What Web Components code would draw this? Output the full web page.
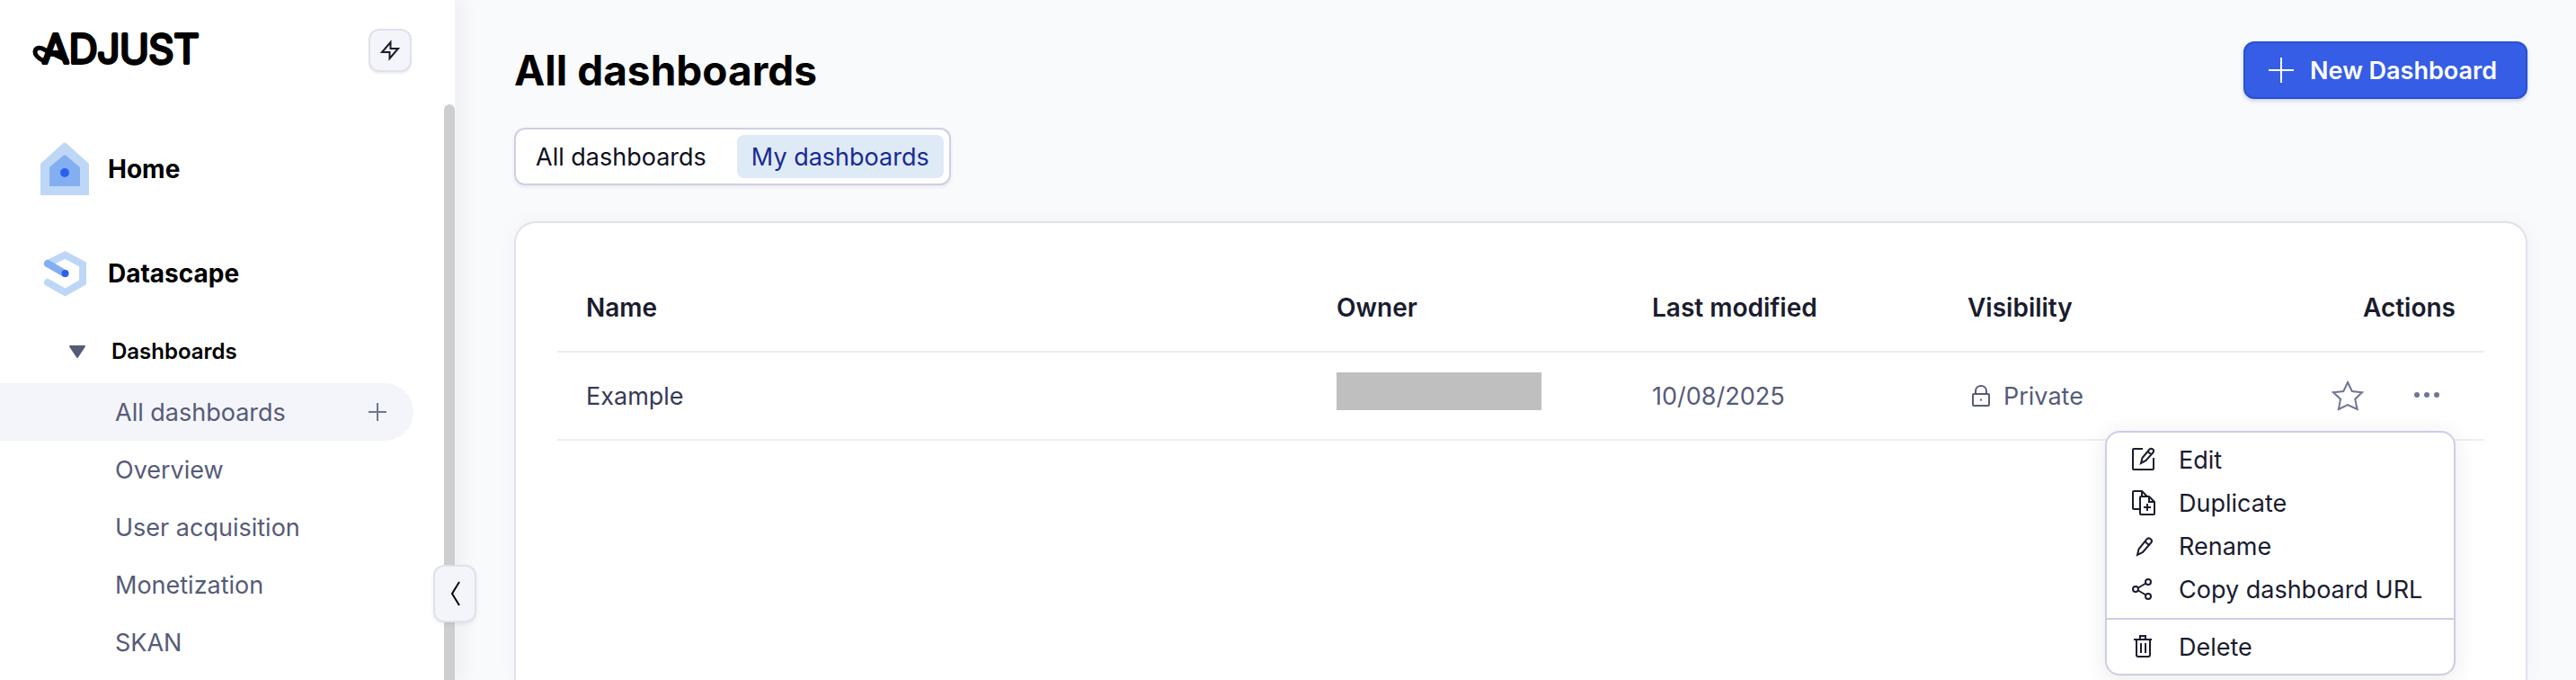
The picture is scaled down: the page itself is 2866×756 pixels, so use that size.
<!DOCTYPE html>
<html lang="en">
<head>
<meta charset="utf-8">
<title>All dashboards</title>
<style>
  body { margin: 0; font: 400 27px/41px Inter, "Liberation Sans", sans-serif; color: #1a1c2e; background: #f9fafc; }
</style>
</head>
<body>
<app-shell>
  <side-nav slot="nav">
    <nav-section label="Home">
      <svg slot="icon" width="56" height="64" viewBox="0 0 56 64"><path d="M26.5 3Q28 2 29.500 3L55 26V61H1V26Z" fill="#bed7f7"/><path d="M26.500 17Q28 15.500 29.500 17L45 30V51H11V30Z" fill="#84aef2"/><circle cx="28" cy="36" r="5" fill="#2a5ff0"/></svg>
    </nav-section>
    <nav-section label="Datascape">
      <svg slot="icon" width="56" height="64" viewBox="0 0 56 64"><path d="M9 21L28.500 11.500L48 22V42L28.500 53L9 42" fill="none" stroke="#bed7f7" stroke-width="8" stroke-linecap="round"/><path d="M9 21L28 32" stroke="#84aef2" stroke-width="8" stroke-linecap="round"/><circle cx="28.500" cy="32" r="4" fill="#2a5ff0"/></svg>
    </nav-section>
    <nav-group label="Dashboards">
      <nav-link active>All dashboards</nav-link>
      <nav-link>Overview</nav-link>
      <nav-link>User acquisition</nav-link>
      <nav-link>Monetization</nav-link>
      <nav-link>SKAN</nav-link>
    </nav-group>
  </side-nav>
  <page-header>All dashboards</page-header>
  <segmented-tabs></segmented-tabs>
  <content-card><dashboard-table></dashboard-table></content-card>
</app-shell>

<script>
function define(name, html, setup) {
  const tpl = document.createElement('template');
  tpl.innerHTML = '<style>*{box-sizing:border-box}svg{display:block;flex:none}button{font:inherit;color:inherit;margin:0;cursor:pointer}</style>' + html;
  customElements.define(name, class extends HTMLElement {
    constructor() {
      super();
      this.attachShadow({ mode: 'open' }).append(tpl.content.cloneNode(true));
    }
    connectedCallback() { if (setup) setup(this, this.shadowRoot); }
  });
}

define('app-shell', `
<style>
  :host { display: flex; height: 100vh; overflow: hidden; }
  main { flex: 1; min-width: 0; display: flex; flex-direction: column; padding: 46px 54px 0 64px; }
</style>
<slot name="nav"></slot>
<main><slot></slot></main>`);

define('brand-logo', `
<style>
  :host { display: block; }
  text { font: 300 44px Inter, sans-serif; fill: #000; stroke: #000; stroke-width: 4; stroke-linejoin: round; }
</style>
<svg width="208" height="64" viewBox="0 0 208 64" role="img" aria-label="Adjust">
  <path d="M17 44C11 41 7 38 7 34C7 29 12 28 17 31L42 43" fill="none" stroke="#000" stroke-width="5" stroke-linecap="round" stroke-linejoin="round"/>
  <text x="15" y="46">ADJUST</text>
</svg>`);

define('side-nav', `
<style>
  :host { position: relative; flex: 0 0 508px; display: flex; flex-direction: column; background: #fff; border-right: 2px solid #f3f4f7; box-shadow: 0 0 24px rgba(30,35,60,.09); box-sizing: border-box; }
  header { display: flex; justify-content: space-between; align-items: center; height: 116px; padding: 0 48px 4px 32px; }
  .quick { display: grid; place-items: center; width: 48px; height: 48px; padding: 0; border: 2px solid #e1e1ec; border-radius: 12px; background: #f4f5fa; box-shadow: 0 2px 2px rgba(30,35,60,.08); }
  .scroll { flex: 1; min-height: 0; display: flex; }
  nav { flex: 1; min-width: 0; padding-top: 14px; }
  .thumb { width: 12px; border-radius: 6px 6px 0 0; background: #cdcecf; }
  .fold { position: absolute; right: -24px; top: 628px; display: grid; place-items: center; width: 48px; height: 64px; padding: 0; border: 2px solid #e1e1ec; border-radius: 12px; background: #f4f5fa; box-shadow: 0 2px 4px rgba(30,35,60,.08); }
</style>
<header>
  <brand-logo></brand-logo>
  <button class="quick" aria-label="Quick actions"><svg width="24" height="24" viewBox="0 0 24 24" fill="none" stroke="#1a1c2e" stroke-width="2"><path d="M12.500 3L3 14H11.500V21L21 10H12.500Z"/></svg></button>
</header>
<div class="scroll"><nav><slot></slot></nav><div class="thumb"></div></div>
<button class="fold" aria-label="Collapse sidebar"><svg width="24" height="32" viewBox="0 0 24 32" fill="none" stroke="#000" stroke-width="2"><path d="M17 3L9 16L17 29"/></svg></button>`);

define('nav-section', `
<style>
  :host { display: block; }
  a { display: flex; align-items: center; gap: 20px; height: 116px; padding-left: 44px; color: #000; font-size: 28px; line-height: 40px; font-weight: 700; text-decoration: none; }
</style>
<a href="#"><slot name="icon"></slot><span></span></a>`,
  (el, root) => { root.querySelector('span').textContent = el.getAttribute('label'); });

define('nav-group', `
<style>
  :host { display: block; }
  .toggle { display: flex; align-items: center; gap: 28px; width: 100%; height: 58px; margin-bottom: 6px; padding: 0 0 0 76px; border: 0; background: none; color: #000; font-size: 24px; line-height: 40px; font-weight: 600; }
</style>
<button class="toggle" aria-expanded="true"><svg width="20" height="16" viewBox="0 0 20 16"><path d="M2 2H18L10 14Z" fill="#565b78" stroke="#565b78" stroke-width="2" stroke-linejoin="round"/></svg><span></span></button>
<slot></slot>`,
  (el, root) => { root.querySelector('span').textContent = el.getAttribute('label'); });

define('nav-link', `
<style>
  :host { display: flex; align-items: center; justify-content: space-between; height: 64px; margin-right: 34px; border-radius: 0 32px 32px 0; color: #565b78; }
  :host([active]) { background: #f4f5fa; }
  a { flex: 1; padding-left: 128px; color: inherit; text-decoration: none; }
  button { display: none; padding: 0; margin-right: 28px; border: 0; background: none; }
  :host([active]) button { display: block; }
</style>
<a href="#"><slot></slot></a>
<button aria-label="Add dashboard"><svg width="24" height="24" viewBox="0 0 24 24" stroke="#6f7594" stroke-width="2"><path d="M2 12H22M12 2V22"/></svg></button>`);

define('page-header', `
<style>
  :host { display: flex; align-items: center; justify-content: space-between; height: 64px; margin-bottom: 32px; }
  h1 { margin: 0; color: #000; font-size: 46px; line-height: 64px; font-weight: 700; }
  button { display: flex; align-items: center; gap: 16px; height: 64px; padding: 0 32px 0 24px; border: 2px solid #2b4fd2; border-radius: 12px; background: #355de6; color: #fff; font-weight: 600; box-shadow: 0 2px 4px rgba(43,79,210,.25); }
</style>
<h1><slot></slot></h1>
<button><svg width="32" height="32" viewBox="0 0 32 32" stroke="#fff" stroke-width="2"><path d="M2 16H30M16 2V30"/></svg>New Dashboard</button>`);

define('segmented-tabs', `
<style>
  :host { align-self: flex-start; display: flex; gap: 18px; height: 64px; box-sizing: border-box; margin-bottom: 40px; padding: 6px; border: 2px solid #cfcfe2; border-radius: 12px; background: #fff; box-shadow: 0 2px 4px rgba(30,35,60,.08); }
  button { padding: 0 16px; border: 0; border-radius: 8px; background: none; color: #0e1020; }
  [aria-pressed="true"] { background: #dfeaf7; color: #172a94; }
</style>
<button aria-pressed="false">All dashboards</button>
<button aria-pressed="true">My dashboards</button>`);

define('content-card', `
<style>
  :host { flex: 1; display: block; padding: 46px 46px 0; border: 2px solid #e1e1ec; border-bottom: 0; border-radius: 24px 24px 0 0; background: #fff; box-shadow: 0 0 24px rgba(30,35,60,.04); }
</style>
<slot></slot>`);

define('dashboard-table', `
<style>
  :host { display: block; }
  table { width: 100%; border-collapse: separate; border-spacing: 0; table-layout: fixed; }
  th, td { height: 98px; padding: 0 32px; border-bottom: 2px solid #ededf4; text-align: left; }
  th { font-size: 28px; line-height: 40px; font-weight: 600; white-space: nowrap; }
  td { color: #565b78; }
  .mid { width: 351px; }
  .vis-col { width: 304px; }
  .act-col { width: 303px; text-align: right; }
  .name { color: #363a55; }
  .mask { width: 228px; height: 42px; margin-bottom: 10px; background: #bfbfbf; }
  .vis { display: flex; align-items: center; gap: 8px; }
  .actions { position: relative; display: flex; justify-content: flex-end; align-items: center; gap: 48px; height: 40px; padding-right: 12px; }
  .actions > button { padding: 0; border: 0; background: none; }
  action-menu { position: absolute; right: 0; top: 59px; z-index: 1; }
</style>
<table>
  <thead><tr><th>Name</th><th class="mid">Owner</th><th class="mid">Last modified</th><th class="vis-col">Visibility</th><th class="act-col">Actions</th></tr></thead>
  <tbody><tr>
    <td class="name">Example</td>
    <td><div class="mask"></div></td>
    <td>10/08/2025</td>
    <td><div class="vis"><svg width="32" height="32" viewBox="0 0 32 32" fill="none" stroke="#565b78" stroke-width="2"><rect x="6" y="14" width="18" height="13" rx="1"/><path d="M9 14V11C9 3 21 3 21 11V14"/><path d="M14 20.500H16"/></svg>Private</div></td>
    <td><div class="actions">
      <button aria-label="Add to favourites"><svg width="40" height="40" viewBox="0 0 40 40" fill="none" stroke="#6f7594" stroke-width="2"><path d="M20 5L24.800 15L36 16.300L28.200 23.700L30.600 35L20 30L9.900 35L12 23.700L4 16.300L15.300 15Z"/></svg></button>
      <button aria-label="More actions" aria-expanded="true"><svg width="40" height="40" viewBox="0 0 40 40" fill="#6f7594"><circle cx="9" cy="19" r="3"/><circle cx="20" cy="19" r="3"/><circle cx="31" cy="19" r="3"/></svg></button>
      <action-menu></action-menu>
    </div></td>
  </tr></tbody>
</table>`);

define('action-menu', `
<style>
  :host { display: block; width: 390px; padding: 6px 0; border: 2px solid #cccee2; border-radius: 16px; background: #fff; color: #1a1c2e; box-shadow: 0 4px 24px rgba(30,35,60,.1); box-sizing: border-box; }
  button { display: flex; align-items: center; gap: 24px; width: 100%; height: 48px; padding: 0 0 0 24px; border: 0; background: none; white-space: nowrap; }
  hr { margin: 8px 0 6px; border: 0; border-top: 2px solid #cccee2; }
  svg { fill: none; stroke: #1a1c2e; stroke-width: 2; }
</style>
<div role="menu">
<button role="menuitem"><svg width="32" height="32" viewBox="0 0 32 32"><path d="M16 4H6Q5 4 5 5V26Q5 27 6 27H27Q28 27 28 26V14"/><path d="M14 20L15.500 14L23.500 4.500Q25 3 27 4.300Q29 6 27.500 8L19.500 17ZM21.500 7L25.500 10.500"/></svg>Edit</button>
<button role="menuitem"><svg width="32" height="32" viewBox="0 0 32 32"><path d="M13 23H6Q5 23 5 22V4Q5 3 6 3H15L21 9M15 3V9"/><path d="M14 9H23L29 15V28Q29 29 28 29H14Q13 29 13 28V10Q13 9 14 9ZM23 9V15H29M21 17V25M17 21H25"/></svg>Duplicate</button>
<button role="menuitem"><svg width="32" height="32" viewBox="0 0 32 32"><path d="M10 26L11.500 19.500L20.500 8.500Q22 6.500 24.500 8Q27 10 25.500 12L16 23ZM18.500 11L22.800 15"/></svg>Rename</button>
<button role="menuitem"><svg width="32" height="32" viewBox="0 0 32 32"><circle cx="8" cy="16" r="3"/><circle cx="22" cy="8" r="3"/><circle cx="22" cy="24" r="3"/><path d="M11 14.500L19.500 9.500M11 17.500L19.500 22.500"/></svg>Copy dashboard URL</button>
<hr>
<button role="menuitem"><svg width="32" height="32" viewBox="0 0 32 32"><path d="M6 8H26M9 8V25Q9 27 11 27H22Q24 27 24 25V8M13 8V4H19V8M14 12V23M19 12V23"/></svg>Delete</button>
</div>`);
</script>
</body>
</html>
